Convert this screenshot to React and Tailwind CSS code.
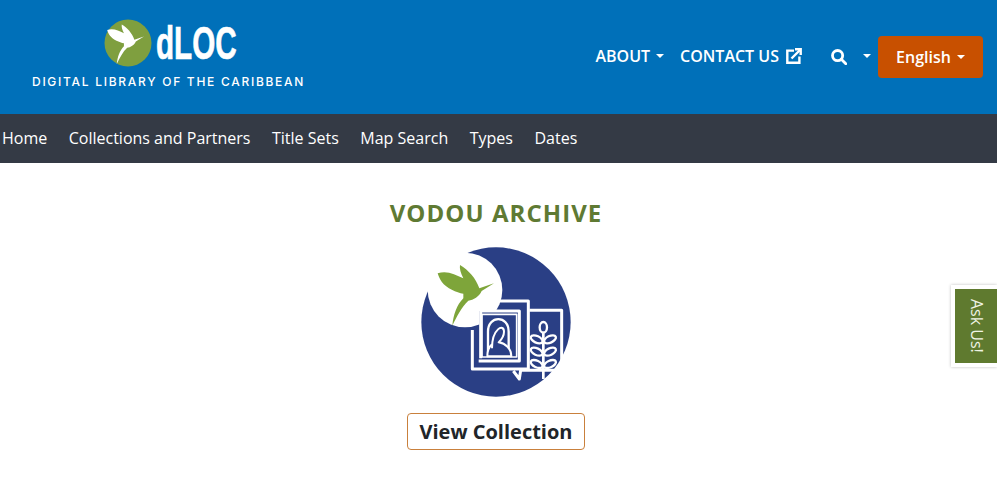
import React from "react";

const BIRD = "M113 115 C140 105 165 118 190 130 C182 115 178 100 180 90 C205 105 228 130 238 160 L282 145 L245 168 C238 185 220 195 205 197 C185 215 170 245 157 272 C160 240 170 210 190 190 L190 176 C170 172 140 160 125 140 C118 130 115 122 113 115 Z";

function Caret({ className = "" }) {
  return <span className={`inline-block w-0 h-0 border-x-[4.5px] border-x-transparent border-t-[4.5px] border-t-white ${className}`} />;
}

function SmallLogo() {
  return (
    <svg width="48" height="48" viewBox="0 0 48 48" className="shrink-0">
      <circle cx="24" cy="24" r="23.5" fill="#7f9f3f" />
      <g transform="translate(-21.3 -14) scale(0.217)">
        <path d={BIRD} fill="#fff" />
      </g>
    </svg>
  );
}

function CollectionLogo() {
  return (
    <svg width="150" height="150" viewBox="63 36 450 450" className="block">
      <circle cx="288" cy="261" r="224" fill="#2a3f85" />
      <circle cx="195" cy="165" r="112" fill="#fff" />
      <path d={BIRD} fill="#7ea53a" />
      <g fill="none" stroke="#fff" strokeWidth="9" strokeLinejoin="round">
        <path d="M300 198 H385 V402 H217 V285" />
        <rect x="238" y="228" width="120" height="148" fill="#2a3f85" stroke="none" />
        <path d="M236 378 H358 V228 H242 V370" />
        <path d="M246 238 V366 H350 V238 Z" strokeWidth="5" />
        <path d="M264 360 V290 C264 240 326 240 326 290 V360" strokeWidth="7" />
        <path d="M276 340 C276 280 312 265 312 290 C312 305 300 318 296 322 C316 325 334 340 334 364 H262 C262 345 268 335 276 328" strokeWidth="6" fill="#2a3f85" />
        <path d="M388 226 H485 V406 H362 L358 432 L340 408" />
        <path d="M430 290 V432" strokeWidth="8" />
      </g>
      <g fill="none" stroke="#fff" strokeWidth="7">
        <ellipse cx="430" cy="277" rx="11" ry="16" />
        <ellipse cx="410" cy="313" rx="19" ry="10" transform="rotate(25 410 313)" />
        <ellipse cx="450" cy="313" rx="19" ry="10" transform="rotate(-25 450 313)" />
        <ellipse cx="410" cy="350" rx="19" ry="10" transform="rotate(25 410 350)" />
        <ellipse cx="450" cy="350" rx="19" ry="10" transform="rotate(-25 450 350)" />
        <ellipse cx="410" cy="387" rx="19" ry="10" transform="rotate(25 410 387)" />
        <ellipse cx="450" cy="387" rx="19" ry="10" transform="rotate(-25 450 387)" />
      </g>
    </svg>
  );
}

export default function App() {
  return (
    <div className="relative w-[997px] h-[479px] overflow-hidden bg-white font-['Open_Sans',sans-serif] text-[#212529]">
      <header className="h-[114px] bg-[#0070b9] flex items-start">
        <div className="w-[272px] ml-[32px] pt-[19px] flex flex-col">
          <div className="flex items-center gap-[4px] h-[48px] ml-[72px]">
            <SmallLogo />
            <span className="block w-[80px] font-['Liberation_Sans',sans-serif] font-bold text-[46px] leading-[48px] text-white origin-left scale-x-[0.645] [-webkit-text-stroke:0.7px_white] whitespace-nowrap">dLOC</span>
          </div>
          <div className="mt-[7px] font-['Inter',sans-serif] font-medium text-[12px] leading-[16px] tracking-[1.72px] text-white whitespace-nowrap">DIGITAL LIBRARY OF THE CARIBBEAN</div>
        </div>
        <div className="ml-auto mr-[14px] mt-[36px] flex items-center h-[42px] text-white text-[16px] font-semibold">
          <span className="whitespace-nowrap pb-[2px]">ABOUT</span>
          <Caret className="ml-[6px] mb-[2px]" />
          <span className="ml-[16px] whitespace-nowrap pb-[2px]">CONTACT US</span>
          <svg className="ml-[7px] mb-[2px]" width="16" height="16" viewBox="0 0 16 16" fill="none" stroke="#fff" strokeWidth="2.4">
            <path d="M8 2.6 H1.3 V14.7 H13.4 V8.5" />
            <path d="M5.5 10.5 L14 2" />
            <path d="M9 1.3 H14.7 V7" />
          </svg>
          <svg className="ml-[29px] mb-[1px]" width="16" height="16" viewBox="0 0 16 16" fill="none" stroke="#fff" strokeWidth="2.8">
            <circle cx="6.6" cy="6.6" r="5.1" />
            <path d="M10.3 10.3 L14.8 14.8" strokeLinecap="round" />
          </svg>
          <Caret className="ml-[16px] mb-[2px]" />
          <button className="ml-[7px] w-[105px] h-[42px] rounded-[4px] bg-[#c85000] text-white font-semibold text-[16px] flex items-center justify-center gap-[6px]">
            English
            <Caret />
          </button>
        </div>
      </header>

      <nav className="h-[49px] bg-[#343a45] pl-[2px] pb-[1px] flex items-center gap-[21.5px] text-white text-[16px]">
        <span>Home</span>
        <span>Collections and Partners</span>
        <span>Title Sets</span>
        <span>Map Search</span>
        <span>Types</span>
        <span>Dates</span>
      </nav>

      <main className="flex flex-col items-center pt-[33px] pr-[5px]">
        <h1 className="text-[24px] leading-[34px] font-bold tracking-[1.05px] text-[#5f7a33]">VODOU ARCHIVE</h1>
        <div className="mt-[17px]">
          <CollectionLogo />
        </div>
        <button className="mt-[16px] w-[178px] h-[37px] border border-[#c9803c] rounded-[4px] bg-white text-[20px] font-bold text-[#212529] flex items-center justify-center">View Collection</button>
      </main>

      <div className="absolute right-0 top-[285px] w-[46px] h-[82px] bg-white pl-[4px] py-[4px] shadow-[0_0_3px_rgba(0,0,0,0.25)]">
        <div className="h-full bg-[#5f7a2f] text-[#f0f4e6] text-[16px] pl-[2px] flex items-center justify-center">
          <span className="[writing-mode:vertical-rl] leading-none whitespace-nowrap">Ask Us!</span>
        </div>
      </div>
    </div>
  );
}
